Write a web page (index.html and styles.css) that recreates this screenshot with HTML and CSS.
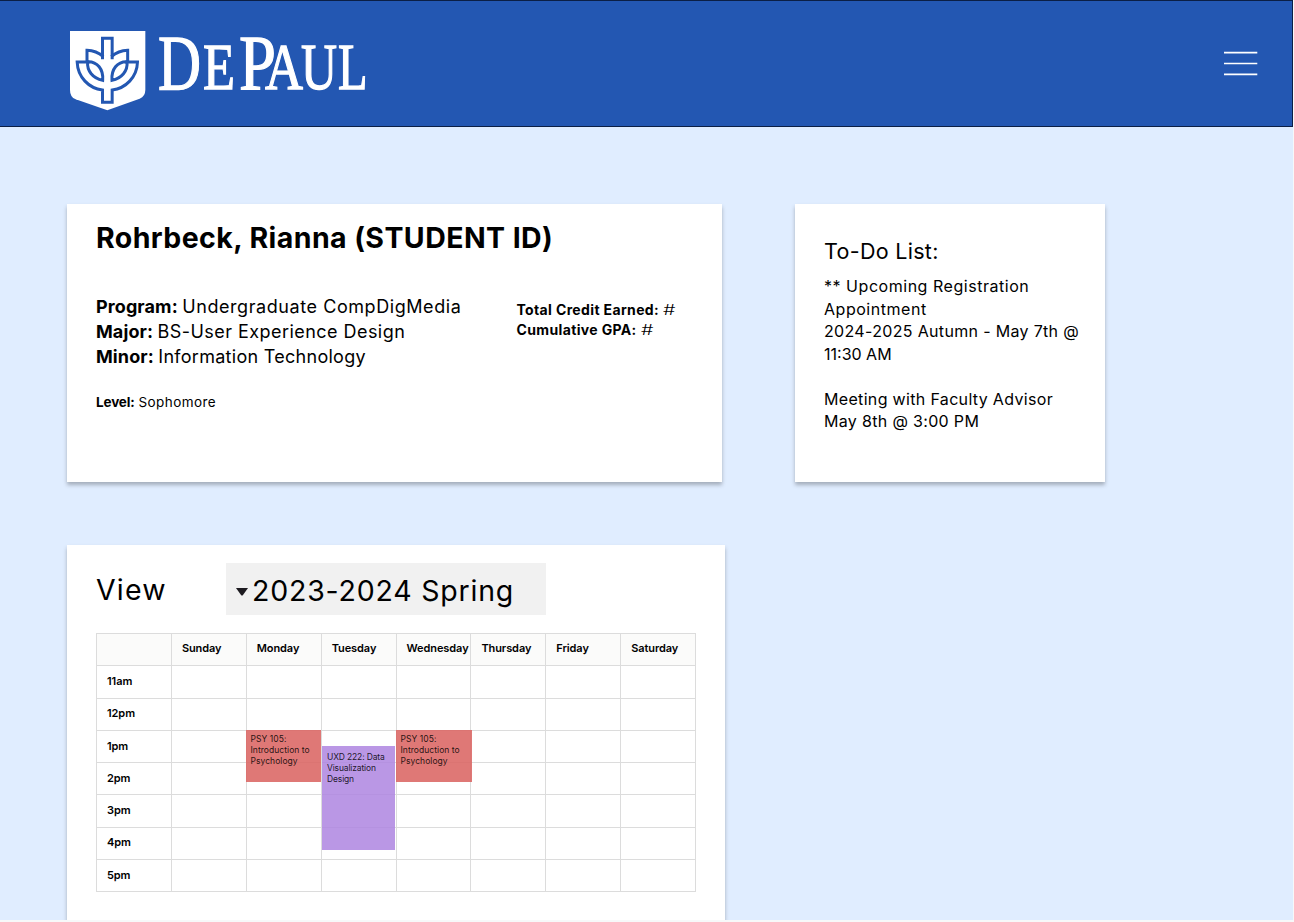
FILE: index.html
```
<!DOCTYPE html>
<html lang="en">
<head>
<meta charset="utf-8">
<title>DePaul Student Dashboard</title>
<link rel="stylesheet" href="styles.css">
</head>
<body>
<div class="page">
<header class="header">
  <svg class="logo" viewBox="0 0 320 110" width="320" height="110" role="img" aria-label="DePaul">
    <g transform="scale(.33333)">
      <path fill="#fff" d="M30 33H256V210Q256 229 239 236L142 271L47 238Q30 232 30 210Z"/>
      <g fill="none" stroke="#2357b2" stroke-width="9">
        <path d="M127.500 118V55H156.500V118"/>
        <path d="M81 126V91Q109 92 130 110M203 126V91Q175 92 154 110"/>
        <path d="M88 126H51.500C53 172 87 205 127.500 210V247H156.500V210C197 205 231 172 232.500 126H196"/>
        <path d="M83 125C112 124 131 148 128 181C99 175 80 153 83 125ZM201 125C172 124 153 148 156 181C185 175 204 153 201 125Z"/>
      </g>
    </g>
    <g class="wordmark">
      <text x="98" y="68.500" font-size="79" textLength="43" lengthAdjust="spacingAndGlyphs">D</text>
      <text x="143" y="68.500" font-size="65" textLength="32" lengthAdjust="spacingAndGlyphs">E</text>
      <text x="179" y="68.500" font-size="79" textLength="37" lengthAdjust="spacingAndGlyphs">P</text>
      <text x="205" y="68.500" font-size="66" textLength="38" lengthAdjust="spacingAndGlyphs">A</text>
      <text x="241" y="68.500" font-size="65" textLength="36" lengthAdjust="spacingAndGlyphs">U</text>
      <text x="278" y="68.500" font-size="65" textLength="29.500" lengthAdjust="spacingAndGlyphs">L</text>
    </g>
  </svg>
  <svg class="menu" viewBox="0 0 34 26" width="34" height="26"><path d="M0 1.700H33.300M0 12.500H33.300M0 23.300H33.300" stroke="#fff" stroke-width="1.700"/></svg>
</header>
<main class="content">
  <div class="row">
    <section class="card profile">
      <h1 class="name">Rohrbeck, Rianna (STUDENT ID)</h1>
      <div class="details">
        <div class="program">
          <p><b>Program:</b> <span class="track-wide">Undergraduate CompDigMedia</span></p>
          <p><b>Major:</b> <span class="track-mid">BS-User Experience Design</span></p>
          <p><b>Minor:</b> <span class="track-snug">Information Technology</span></p>
        </div>
        <div class="credits">
          <p><b>Total Credit Earned:</b> <span class="value">#</span></p>
          <p><b>Cumulative GPA:</b> <span class="value">#</span></p>
        </div>
      </div>
      <p class="level"><b>Level:</b> <span class="track-mid">Sophomore</span></p>
    </section>
    <section class="card todo">
      <h2 class="todo-title">To-Do List:</h2>
      <p class="todo-text"><span class="track-wide">** Upcoming Registration</span><br><span class="track-wide">Appointment</span><br>2024-2025 Autumn - May 7th @<br><span class="track-none">11:30 AM</span></p>
      <p class="todo-text">Meeting with Faculty Advisor<br>May 8th @ 3:00 PM</p>
    </section>
  </div>
  <section class="card schedule">
    <div class="toolbar">
      <span class="view">View</span>
      <div class="term"><svg class="caret" viewBox="0 0 12 8" width="12" height="8"><path d="M0 0H12L7 7Q6 8 5 7Z" fill="#1d1b20"/></svg><span>2023-2024 Spring</span></div>
    </div>
    <div class="calendar">
      <table class="grid">
        <tr><th></th><th>Sunday</th><th>Monday</th><th>Tuesday</th><th>Wednesday</th><th>Thursday</th><th>Friday</th><th>Saturday</th></tr>
        <tr><td>11am</td><td></td><td></td><td></td><td></td><td></td><td></td><td></td></tr>
        <tr><td>12pm</td><td></td><td></td><td></td><td></td><td></td><td></td><td></td></tr>
        <tr><td>1pm</td><td></td><td></td><td></td><td></td><td></td><td></td><td></td></tr>
        <tr><td>2pm</td><td></td><td></td><td></td><td></td><td></td><td></td><td></td></tr>
        <tr><td>3pm</td><td></td><td></td><td></td><td></td><td></td><td></td><td></td></tr>
        <tr><td>4pm</td><td></td><td></td><td></td><td></td><td></td><td></td><td></td></tr>
        <tr><td>5pm</td><td></td><td></td><td></td><td></td><td></td><td></td><td></td></tr>
      </table>
      <div class="event psych monday">PSY 105:<br>Introduction to<br>Psychology</div>
      <div class="event design">UXD 222: Data<br>Visualization<br>Design</div>
      <div class="event psych wednesday">PSY 105:<br>Introduction to<br>Psychology</div>
    </div>
  </section>
</main>
</div>
</body>
</html>
```
FILE: styles.css
```
* { box-sizing: border-box; }
body { margin: 0; background: #f7f8f9; color: #000; font-family: Inter, sans-serif; height: 922px; overflow: hidden; }
h1, h2, p { margin: 0; font-weight: 400; }
b { font-weight: 700; }
.page { width: 1293px; height: 920px; background: #e0edff; overflow: hidden; }
.header { height: 127px; background: #2357b2; border: 1px solid #0b1f45; border-left: 0; display: flex; justify-content: space-between; align-items: flex-start; padding: 19px 34px 0 60px; }
.logo { overflow: visible; }
.wordmark { fill: #fff; stroke: #fff; stroke-width: 1.300px; font-family: "Liberation Serif", serif; }
.menu { margin-top: 31px; }
.content { padding: 77px 0 0 67px; }
.row { display: flex; gap: 73.500px; }
.card { background: #fff; box-shadow: 0 3px 4px rgba(0, 0, 0, .27); }
.profile { width: 654.500px; height: 278px; padding: 16px 29px; }
.name { font-size: 28.500px; line-height: 36px; font-weight: 700; white-space: nowrap; letter-spacing: .42px; }
.details { display: flex; margin-top: 38px; }
.program { width: 420.500px; font-size: 18px; line-height: 25.200px; white-space: nowrap; }
.program b { letter-spacing: .1px; }
.program p { letter-spacing: -.6px; }
.program .track-wide { letter-spacing: .57px; }
.track-wide { letter-spacing: .53px; }
.track-mid { letter-spacing: .45px; }
.track-snug { letter-spacing: .28px; }
.todo-text .track-none { letter-spacing: 0; }
.credits { font-size: 14px; line-height: 20px; padding-top: 6px; white-space: nowrap; }
.credits b { letter-spacing: .36px; }
.value { display: inline-block; transform: scaleX(1.4); transform-origin: 0 50%; font-weight: 300; }
.level { font-size: 13.500px; line-height: 20px; margin-top: 22px; }
.level b { letter-spacing: -.15px; }
.todo { width: 309.500px; height: 278px; padding: 32px 0 0 29px; white-space: nowrap; }
.todo-title { font-size: 21.500px; line-height: 30px; letter-spacing: .3px; }
.todo-text { font-size: 16px; line-height: 22.500px; margin-top: 9px; letter-spacing: .33px; }
.todo-text + .todo-text { margin-top: 22.500px; }
.schedule { width: 658px; height: 400px; margin-top: 63px; padding: 18px 29px; }
.toolbar { display: flex; height: 52px; align-items: center; font-size: 28.500px; letter-spacing: .8px; }
.view { width: 130px; padding-top: 1px; letter-spacing: 1.200px; }
.term { width: 320px; height: 52px; background: #f1f1f1; display: flex; align-items: center; padding: 2px 0 0 10px; gap: 4px; white-space: nowrap; }
.caret { margin-top: 3px; }
.calendar { position: relative; margin-top: 18px; width: 600px; }
.grid { border-collapse: collapse; table-layout: fixed; width: 600px; height: 258.500px; }
.grid th, .grid td { border: 1px solid #dcdcdc; height: 32.300px; padding: 0 0 2px 10px; font-size: 11px; line-height: 14px; font-weight: 600; letter-spacing: -.08px; text-align: left; white-space: nowrap; }
.grid th { background: #fbfbfa; padding-bottom: 3px; }
.event { position: absolute; font-size: 8.500px; line-height: 10.900px; white-space: nowrap; color: rgba(0, 0, 0, .85); }
.psych { top: 97px; height: 52px; width: 75px; background: rgba(218, 100, 98, .87); padding: 4px 0 0 4.500px; letter-spacing: .05px; }
.monday { left: 150px; }
.wednesday { left: 300px; width: 76px; }
.design { left: 226px; top: 113px; width: 73px; height: 104px; background: rgba(174, 133, 225, .85); padding: 6px 0 0 5px; letter-spacing: -.15px; }
```
